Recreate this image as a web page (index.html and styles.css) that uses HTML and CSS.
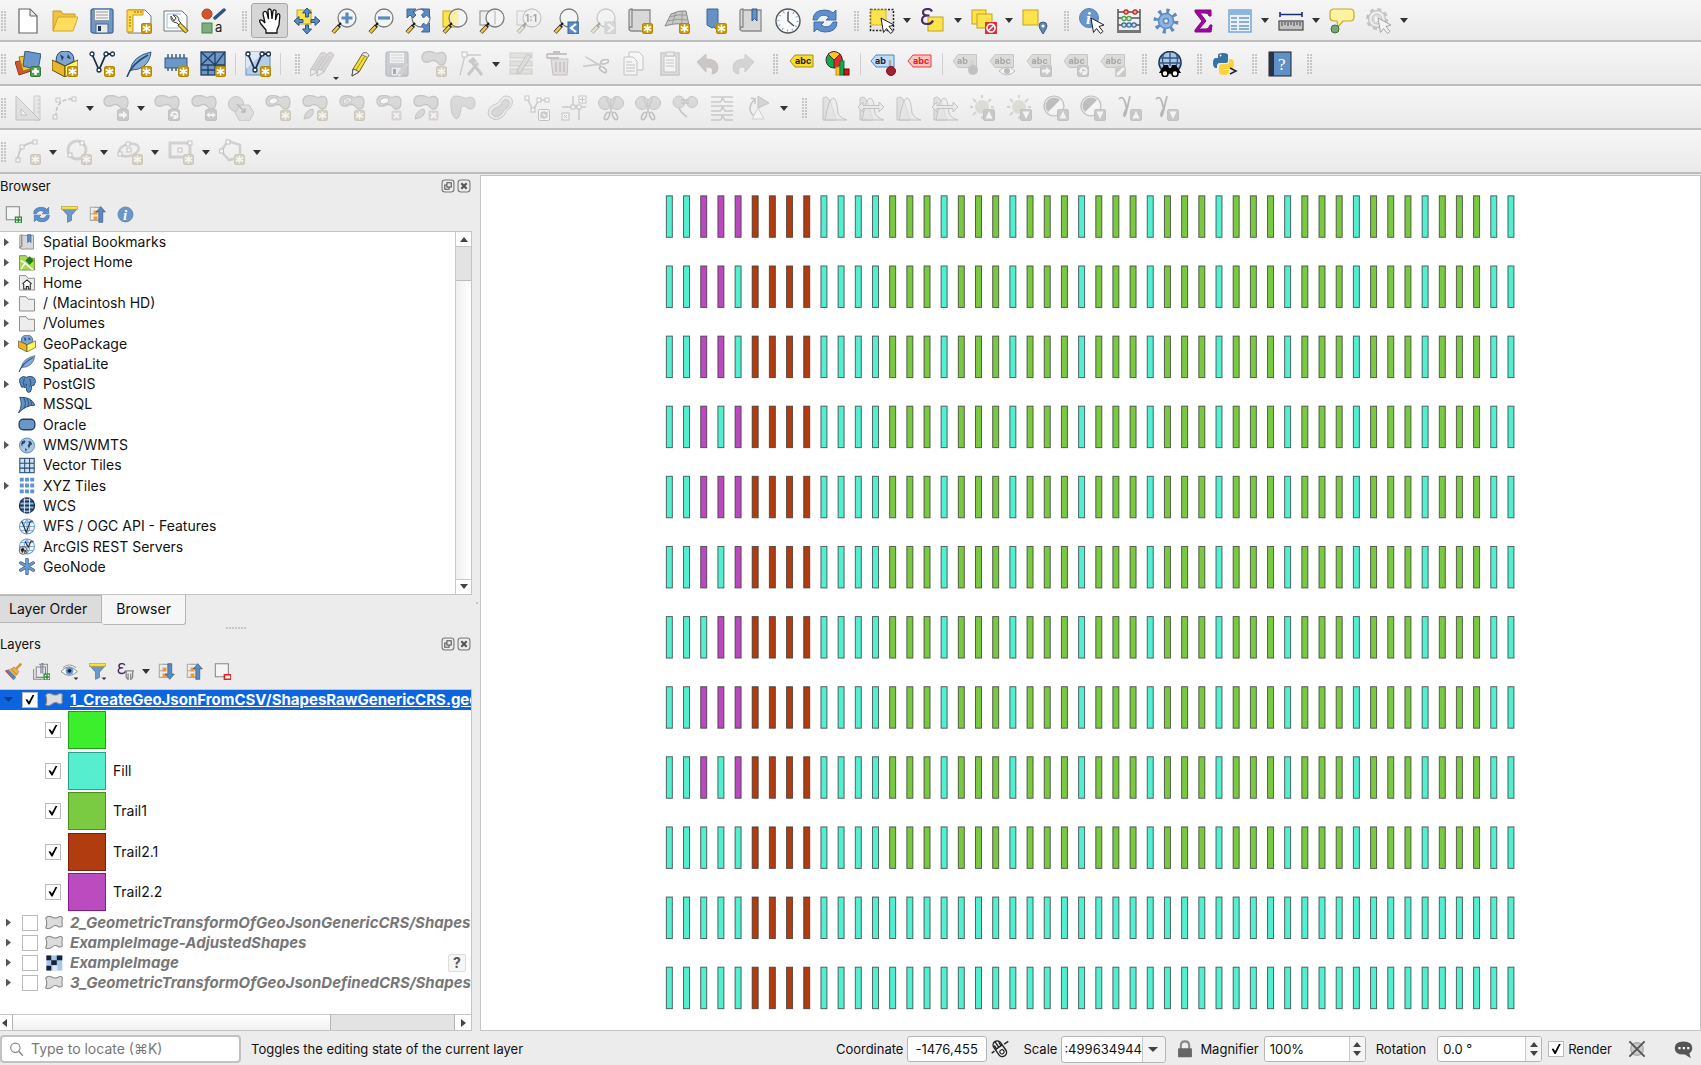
FILE: index.html
```html
<!DOCTYPE html>
<html lang="en">
<head>
<meta charset="utf-8">
<title>QGIS</title>
<link rel="stylesheet" href="styles.css">
</head>
<body>
<svg class="sprite" aria-hidden="true">
<!-- badges -->
<symbol id="b-new" viewBox="0 0 26 26"><rect x="15.500" y="15.500" width="10" height="10" rx="1.500" fill="#c99a12" stroke="#b58900" /><path d="M20.500 16.500v8M16.800 18.500l7.400 4M24.200 18.500l-7.400 4" stroke="#fff" stroke-width="1.600"/></symbol>
<symbol id="b-plus" viewBox="0 0 26 26"><rect x="15.500" y="15.500" width="10" height="10" rx="1.500" fill="#5a9a5c" stroke="#2f7a35"/><path d="M20.500 17v7M17 20.500h7" stroke="#fff" stroke-width="2.400"/></symbol>
<symbol id="b-x" viewBox="0 0 26 26"><rect x="15.500" y="15.500" width="10" height="10" rx="1.500" fill="#d99aa4"/><path d="M18 18l5 5M23 18l-5 5" stroke="#fff" stroke-width="2"/></symbol>
<symbol id="b-sq" viewBox="0 0 26 26"><rect x="14.500" y="14.500" width="11" height="11" rx="1.500" fill="#888" stroke="#777"/></symbol>
<symbol id="b-right" viewBox="0 0 26 26"><use href="#b-sq"/><path d="M16 18.500h4v-2.500l4.500 4-4.500 4v-2.500h-4z" fill="#fff"/></symbol>
<symbol id="b-turn" viewBox="0 0 26 26"><use href="#b-sq"/><path d="M17.500 20a3 3 0 1 1 3.500 3" fill="none" stroke="#fff" stroke-width="1.800"/><path d="M15.500 19.500h4.500l-2.200 3zM20 20h2v4h-3z" fill="#fff"/></symbol>
<symbol id="b-up" viewBox="0 0 26 26"><use href="#b-sq"/><path d="M20 16l3.500 7.500h-7z" fill="#fff"/></symbol>
<symbol id="b-down" viewBox="0 0 26 26"><use href="#b-sq"/><path d="M20 24l3.500-7.500h-7z" fill="#fff"/></symbol>
<!-- shared shapes -->
<symbol id="s-lens" viewBox="0 0 26 26"><path d="M2 24.500l6.500-7" stroke="#222" stroke-width="4"/><path d="M2.200 24.300l5.300-5.700" stroke="#f5c83b" stroke-width="2.500"/><circle cx="16" cy="10" r="9" fill="#f4f6f6" fill-opacity=".8" stroke="#7c7c7c" stroke-width="1.300"/><path d="M8 17l2-2" stroke="#111" stroke-width="2"/></symbol>
<symbol id="s-blob" viewBox="0 0 26 26"><path d="M1 6.500q0-6 7-6q3 0 6 1.500q3 1 5-.5q6-1 6 5.500q0 7-5 7q-2 0-4-3q-3-3-8 0q-7 1-7-4.500z" fill="#a6b0a6" stroke="#777" stroke-width="1.300"/></symbol>
<symbol id="s-ring" viewBox="0 0 26 26"><use href="#s-blob"/><ellipse cx="8.500" cy="6" rx="4.500" ry="3" transform="rotate(-15 8 6)" fill="#fff" stroke="#777"/></symbol>
<symbol id="s-tag" viewBox="0 0 26 26"><path d="M1 10l5-6.500h18.500v13H6z" fill="#b9b79b" stroke="#7f7d68"/><text x="5.500" y="13" class="tagtext" fill="#222">abc</text></symbol>
<symbol id="s-globe" viewBox="0 0 26 26"><circle cx="13" cy="13" r="11.500" fill="#a9c6e8" stroke="#5c83b3" stroke-width="1.400"/><path d="M5 7l4-2 2 2-2 3-3 1v4l-2-3zM15 6l4 1 2 4-3 2-2 5-2-5 2-3zM10 17l3 2-2 4z" fill="#27496f"/></symbol>
<symbol id="s-wire" viewBox="0 0 26 26"><circle cx="13" cy="13" r="11.500" fill="#eef5ff" stroke="#6d9bd1" stroke-width="1.600"/><path d="M13 2v22M2 13h22M4 7h18M4 19h18M13 2q-9 11 0 22q9-11 0-22" fill="none" stroke="#6d9bd1" stroke-width="1.300"/></symbol>
<symbol id="s-cursor" viewBox="0 0 26 26"><path d="M12 10l13 7-5 1.500 4 5-2.500 2-4-5-3 4z" fill="#fff" stroke="#222"/></symbol>
<symbol id="s-scroll" viewBox="0 0 26 26"><path d="M2 3q0-2 3-2v18h-1q-2 0-2 3zM5 2h18v21H4q-3-1-1-4h2z" fill="#d8d8d8" stroke="#8a8a8a" stroke-width="1.300"/></symbol>
<symbol id="s-v" viewBox="0 0 26 26"><path d="M3 3l7 16L17 3h6" fill="none" stroke="#1d3146" stroke-width="1.800"/><g fill="#fff" stroke="#1d3146" stroke-width="1.300"><circle cx="3" cy="3" r="2"/><circle cx="10" cy="19" r="2"/><circle cx="17" cy="3" r="2"/><circle cx="23.500" cy="3" r="2"/></g></symbol>
<symbol id="s-feather" viewBox="0 0 26 26"><path d="M4 20q2-15 21-19q-1 9-7 14q-5 4-12 4z" fill="#86acd8" stroke="#35587f"/><path d="M1 26q4-13 21-22" fill="none" stroke="#27496f" stroke-width="1.600"/></symbol>
<symbol id="s-box" viewBox="0 0 26 26"><path d="M4 10q0-10 9-10t9 10l-9 5z" fill="#7ea5d4" stroke="#24476d"/><path d="M8 3l4 3-2 4M16 3l-1 4 4 1" fill="#27496f"/><path d="M0 9l13 6v11L0 19z" fill="#e9b52c" stroke="#634e0c"/><path d="M26 9l-13 6v11l13-7z" fill="#fff36a" stroke="#634e0c"/></symbol>
<symbol id="s-pencil" viewBox="0 0 26 26"><path d="M5 25l1-7L16 2q4-2 6 2L12 21z" fill="#f2de3c" stroke="#6a6325" /><path d="M5 25l1-7 3 1 3 2z" fill="#eee" stroke="#555"/><path d="M16 2q4-2 6 2l-1.500 2.500-6-3z" fill="#e8e8e8" stroke="#888"/><path d="M9 19l9-14" stroke="#a59522"/></symbol>
<symbol id="s-dim" viewBox="0 0 26 26"><path d="M3 25l1-7L14 2q4-2 6 2L10 21z" fill="#bfa3a3" stroke="#777"/><path d="M3 25l1-7 3 1 3 2z" fill="#eee" stroke="#777"/><path d="M7 19l9-14" stroke="#8d7676"/></symbol>
<symbol id="s-hist" viewBox="0 0 26 26"><path d="M2 25V3q6-5 10 12q2 7 3 10z" fill="#b7cdb4" stroke="#777"/><path d="M4 25q4-22 8-22t5 15q2 5 9 7z" fill="#ead9d9" fill-opacity=".6" stroke="#777"/></symbol>
<symbol id="s-arrows" viewBox="0 0 26 26"><path d="M0 12l5-5v3.500h16V7l5 5-5 5v-3.500H5V17z" fill="#ddd" stroke="#777"/></symbol>
<symbol id="s-sun" viewBox="0 0 26 26"><circle cx="13" cy="12" r="7" fill="#c1b98c"/><path d="M13 0v3M13 21v3M1 12h3M22 12h3M4 4l3 3M19 7l3-3M4 20l3-3" stroke="#a59d70" stroke-width="1.800"/></symbol>
<symbol id="s-contrast" viewBox="0 0 26 26"><circle cx="11" cy="11" r="10" fill="#f3f3f3" stroke="#666" stroke-width="1.200"/><circle cx="11" cy="11" r="8" fill="#fff"/><path d="M5 17A8 8 0 0 1 17 5z" fill="#666"/></symbol>
<symbol id="s-scissors" viewBox="0 0 26 26"><path d="M8 1l6 17M18 1l-6 17" stroke="#888" stroke-width="1.600"/><g fill="none" stroke="#8e6670" stroke-width="1.600"><ellipse cx="9" cy="21" rx="2" ry="4" transform="rotate(25 9 21)"/><ellipse cx="17" cy="21" rx="2" ry="4" transform="rotate(-25 17 21)"/></g></symbol>
<symbol id="s-funnel" viewBox="0 0 26 26"><path d="M1 4l9 10v11l6-3v-8l9-10z" fill="#6b98ce" stroke="#456a98"/><rect x="1" y="1" width="24" height="4" fill="#f8e33c" stroke="#b89e26"/></symbol>
<symbol id="s-tree" viewBox="0 0 26 26"><path d="M10 2H2v20h8M2 12h8" fill="none" stroke="#aaa" stroke-width="1.600"/><path d="M8 2h9M8 22h9" stroke="#aaa" stroke-width="2"/><rect x="7" y="7" width="6" height="6" fill="#f09a32"/><rect x="7" y="16" width="6" height="6" fill="#f09a32"/></symbol>
<symbol id="s-folder" viewBox="0 0 26 26"><path d="M1.500 2.500h10l3 4h10v18h-23z" fill="#ededed" stroke="#8d8d8d" stroke-width="1.500"/></symbol>
<symbol id="s-poly" viewBox="0 0 26 26"><path d="M1 6q3-4 8-2q5 3 9 1q5-3 7 0q-1 8 0 12q-3 3-6 1q-4-3-9 1q-5 4-9 1q3-6 0-14z" fill="#dcdcdc" stroke="#868686" stroke-width="1.500"/></symbol>
<symbol id="s-eps" viewBox="0 0 26 26"><path d="M12 3.500q-1-2.500-4-2.500-5 0-5 3.500 0 3 5 3-6 0-6 4.500 0 4 5 4 4.500 0 6-3.500M6.500 7.500h3" fill="none" stroke="#4b2c63" stroke-width="2.200"/></symbol>
<!-- project toolbar -->
<symbol id="i-new" viewBox="0 0 26 26"><path d="M4 1h11l7 7v17H4z" fill="#fff" stroke="#666" stroke-width="1.200"/><path d="M15 1v7h7z" fill="#e7e7e7" stroke="#666"/></symbol>
<symbol id="i-open" viewBox="0 0 26 26"><path d="M1 3h8l2 3h12v5L4 22l-3 1z" fill="#f1c33e" stroke="#c39b20"/><path d="M6 9h20l-5 14H1z" fill="#fddd5d" stroke="#cfa62b"/></symbol>
<symbol id="i-save" viewBox="0 0 26 26"><rect x="2" y="1" width="22" height="24" rx="2" fill="#6f98c9" stroke="#466b99" stroke-width="1.300"/><rect x="5.500" y="1.500" width="15" height="11" fill="#f5f5f5" stroke="#8a97a6"/><path d="M7 4h12M7 7h12M7 10h12" stroke="#999"/><rect x="7" y="16" width="12" height="9" fill="#e8e8e8" stroke="#466b99"/><rect x="9" y="18" width="3" height="5" fill="#1f3556"/></symbol>
<symbol id="i-layout" viewBox="0 0 26 26"><path d="M2 2h17l6 6v17H2z" fill="#fff" stroke="#777"/><path d="M1 2h16v5H7v17H1z" fill="#ffd94e" stroke="#c79c1c"/><path d="M3 9h2M3 12h2M3 15h2M3 18h2M9 3v2M12 3v2M15 3v2" stroke="#8c6d10"/><use href="#b-new"/></symbol>
<symbol id="i-manager" viewBox="0 0 26 26"><path d="M1 3h18l5 5v15H1z" fill="#fff" stroke="#777"/><path d="M4 6h14M4 6v14h12" fill="none" stroke="#9bbbe0"/><path d="M8 8q-1 6 6 7l2 2 2-2-2-2q0-6-6-6l3 3-2 3z" fill="#eee" stroke="#444"/><path d="M16 16l8 8" stroke="#5b4a10" stroke-width="4.500"/><path d="M16.500 16.500l7 7" stroke="#f2cf45" stroke-width="2.500"/></symbol>
<symbol id="i-style" viewBox="0 0 26 26"><circle cx="7" cy="6" r="5" fill="#d0552f" stroke="#b0401d"/><rect x="2" y="15" width="10" height="10" fill="#7cae7e" stroke="#47834b"/><path d="M15 10l9-8" stroke="#2d5486" stroke-width="3.500" stroke-linecap="round"/><text x="15" y="24" font-size="13" fill="#222">a</text></symbol>
<!-- navigation toolbar -->
<symbol id="i-hand" viewBox="0 0 26 26"><path d="M9 25v-3L4 16q-2-3-1-4q2-1 5 3L6 6q0-2 1.500-2.500T10 5l1.500 6L11 2.500Q11 1 12.500 1T14.300 3L15 11l1-8q.5-1.500 2-1t1 2l-.5 8L20 7q1-2 2-1t.8 2L22 17l-2 5v3z" fill="#fff" stroke="#111" stroke-width="1.300"/></symbol>
<symbol id="i-pan" viewBox="0 0 26 26"><rect x="3" y="2" width="14" height="14" fill="#fde44a" stroke="#c1a218"/><g fill="#5d8cc2" stroke="#2b5282"><path id="arrow4" d="M13 0l4.500 5h-3v4h-3V5h-3z"/><use href="#arrow4" transform="rotate(90 13 13)"/><use href="#arrow4" transform="rotate(180 13 13)"/><use href="#arrow4" transform="rotate(270 13 13)"/></g></symbol>
<symbol id="i-zin" viewBox="0 0 26 26"><use href="#s-lens"/><path d="M16 4.500v11M10.500 10h11" stroke="#5b8ac0" stroke-width="3.200"/></symbol>
<symbol id="i-zout" viewBox="0 0 26 26"><use href="#s-lens"/><path d="M10 10h12" stroke="#5b8ac0" stroke-width="3.200"/></symbol>
<symbol id="i-zfull" viewBox="0 0 26 26"><use href="#s-lens"/><g fill="#5b8ac0" stroke="#3c6695"><path d="M2 1h9L8 4l3 3-3 3-3-3-3 3z"/><path d="M24.500 1h-8l3 3-3 3 2 3 3-3 3 3z"/><path d="M24.500 24h-8l3-3-3-3 2-3 3 3 3-3z"/></g></symbol>
<symbol id="i-zsel" viewBox="0 0 26 26"><rect x="1" y="3" width="15" height="16" fill="#fde44a" stroke="#c1a218"/><use href="#s-lens"/><path d="M10 5q6-4 6 0v11H11q-5-5-1-11z" fill="#fbefa0"/></symbol>
<symbol id="i-zlayer" viewBox="0 0 26 26"><rect x="1" y="3" width="15" height="14" fill="#eee" stroke="#888"/><use href="#s-lens"/><path d="M16 3v13" stroke="#bbb"/></symbol>
<symbol id="i-z11" viewBox="0 0 26 26"><rect x="1" y="3" width="15" height="14" fill="#eee" stroke="#888"/><use href="#s-lens"/><text x="9" y="14" font-size="10" font-weight="700" fill="#222">1:1</text></symbol>
<symbol id="i-zlast" viewBox="0 0 26 26"><use href="#s-lens"/><rect x="15" y="14" width="11" height="12" fill="#5b8ac0" stroke="#3c6695"/><path d="M23 16l-5 4 5 4" fill="none" stroke="#fff" stroke-width="2.200"/></symbol>
<symbol id="i-znext" viewBox="0 0 26 26"><use href="#s-lens"/><rect x="15" y="14" width="11" height="12" fill="#9fb0c4" stroke="#8899aa"/><path d="M18 16l5 4-5 4" fill="none" stroke="#fff" stroke-width="2.200"/></symbol>
<symbol id="i-newmap" viewBox="0 0 26 26"><use href="#s-scroll"/><use href="#b-new"/></symbol>
<symbol id="i-new3d" viewBox="0 0 26 26"><path d="M7 6q8-4 15-3l3 14q-12-3-24 1z" fill="#c9c9c9" stroke="#888"/><path d="M5 9q9-3 18-2M3 13q11-3 21-1M12 4L8 17M18 3v13" fill="none" stroke="#999"/><use href="#b-new"/></symbol>
<symbol id="i-newbm" viewBox="0 0 26 26"><path d="M6 1h11v22l-4-4-2 1-5-3z" fill="#6591c6" stroke="#3d6698"/><use href="#b-new"/></symbol>
<symbol id="i-bm" viewBox="0 0 26 26"><use href="#s-scroll"/><path d="M14 1h5v12l-2.500-2.500L14 13z" fill="#6591c6" stroke="#2d5486"/></symbol>
<symbol id="i-clock" viewBox="0 0 26 26"><circle cx="13" cy="13" r="12" fill="#f8fbfd" stroke="#555" stroke-width="1.400"/><circle cx="13" cy="13" r="9.500" fill="none" stroke="#77a0cc" stroke-width="2" stroke-dasharray="1 3.970"/><path d="M13 4v9l6 5" fill="none" stroke="#555" stroke-width="1.500"/></symbol>
<symbol id="i-refresh" viewBox="0 0 26 26"><path d="M1 12q0-10 12-10q5 0 8 3l3-3v10H14l3-3q-8-5-12 3z" fill="#5f90cd" stroke="#3f6fa8"/><path d="M25 14q0 10-12 10q-5 0-8-3l-3 3V14h10l-3 3q8 5 12-3z" fill="#5f90cd" stroke="#3f6fa8"/></symbol>
<!-- selection and attributes -->
<symbol id="i-select" viewBox="0 0 26 26"><rect x="1.500" y="1.500" width="23" height="21" fill="#e6e6e6" stroke="#222" stroke-width="1.500" stroke-dasharray="2 1.500"/><rect x="2" y="2" width="15" height="15" fill="#fde44a" stroke="#d7b622"/><use href="#s-cursor"/></symbol>
<symbol id="i-eps" viewBox="0 0 26 26"><rect x="8" y="9" width="15" height="14" fill="#fde44a" stroke="#c1a218"/><use href="#s-eps"/></symbol>
<symbol id="i-desel" viewBox="0 0 26 26"><rect x="1" y="2" width="14" height="14" fill="#fde44a" stroke="#c1a218"/><rect x="6" y="6" width="15" height="14" fill="#fde44a" stroke="#c1a218"/><rect x="14" y="14" width="12" height="12" fill="#d9303a"/><circle cx="20" cy="20" r="4" fill="none" stroke="#fff" stroke-width="1.600"/><path d="M17 23l6-6" stroke="#fff" stroke-width="1.600"/></symbol>
<symbol id="i-selloc" viewBox="0 0 26 26"><rect x="1" y="2" width="15" height="15" fill="#fde44a" stroke="#c1a218"/><path d="M21 26q-4-6-4-8a4 4 0 0 1 8 0q0 2-4 8z" fill="#5f87b2" stroke="#406080"/><circle cx="21" cy="18" r="1.500" fill="#fff"/></symbol>
<symbol id="i-identify" viewBox="0 0 26 26"><circle cx="10" cy="10" r="9.500" fill="#6b96c9" stroke="#5580b3"/><text x="7" y="16" font-size="17" font-style="italic" font-weight="700" class="serif" fill="#fff">i</text><use href="#s-cursor"/></symbol>
<symbol id="i-abacus" viewBox="0 0 26 26"><path d="M2 1v23M24 1v23M2 4h22M2 10h22M2 17h22" stroke="#555" stroke-width="1.500"/><rect x="1" y="22" width="24" height="3" fill="#777"/><g stroke-width="1.200"><g fill="#f3a0a0" stroke="#b82222"><circle cx="10" cy="4" r="2.200"/><circle cx="19" cy="4" r="2.200"/></g><g fill="#cdeccb" stroke="#4a9b46"><circle cx="8" cy="10.500" r="2.200"/><circle cx="13" cy="10.500" r="2.200"/></g><g fill="#cde0f6" stroke="#35669c"><circle cx="8" cy="17" r="2.200"/><circle cx="13" cy="17" r="2.200"/><circle cx="18" cy="17" r="2.200"/></g></g></symbol>
<symbol id="i-gear" viewBox="0 0 26 26"><circle cx="13" cy="13" r="10" fill="none" stroke="#5c8ac4" stroke-width="5" stroke-dasharray="3 4.854"/><circle cx="13" cy="13" r="7.500" fill="#8fb3e0" stroke="#5c8ac4" stroke-width="1.500"/><circle cx="13" cy="13" r="2.500" fill="#f2f2f2" stroke="#5c8ac4" stroke-width="1.500"/></symbol>
<symbol id="i-sigma" viewBox="0 0 26 26"><path d="M5 2h16v6h-2q0-3-4-3H10l6 8-7 8h7q3 0 4-4h2l-1 7H5v-2l7-9-7-9z" fill="#a400a4" stroke="#7d0c7d"/></symbol>
<symbol id="i-table" viewBox="0 0 26 26"><rect x="2" y="2" width="22" height="22" fill="#eaf3fc" stroke="#78a5d2" stroke-width="1.500"/><rect x="2" y="2" width="22" height="5" fill="#8db7e2"/><path d="M4 10h6M12 10h10M4 14h6M12 14h10M4 18h6M12 18h10M4 21h6M12 21h10" stroke="#6d98c6" stroke-width="1.500"/></symbol>
<symbol id="i-measure" viewBox="0 0 26 26"><path d="M2 6.500h22M2 4v5M24 4v5" stroke="#1c2c78" stroke-width="1.600"/><rect x="1" y="13" width="24" height="9" fill="#c2c2c2" stroke="#555" stroke-width="1.300"/><path d="M4 14v4M7 14v3M10 14v4M13 14v3M16 14v4M19 14v3M22 14v4" stroke="#444"/></symbol>
<symbol id="i-tip" viewBox="0 0 26 26"><path d="M5 1h16q4 0 4 4v4q0 4-4 4h-7l-5 6-1-6H5q-4 0-4-4V5q0-4 4-4z" fill="#fdf3a0" stroke="#c4a92a" stroke-width="1.200"/><circle cx="6" cy="21" r="4" fill="#74a873" stroke="#406e40"/></symbol>
<symbol id="i-action" viewBox="0 0 26 26"><circle cx="11" cy="11" r="9.500" fill="none" stroke="#777" stroke-width="3" stroke-dasharray="4 3.460"/><circle cx="11" cy="11" r="8.500" fill="#e8e8e8" stroke="#777" stroke-width="1.300"/><circle cx="11" cy="11" r="5" fill="#bbb" stroke="#777"/><path d="M9 8l5 3-5 3z" fill="#fff"/><use href="#s-cursor"/></symbol>
<!-- data source toolbar -->
<symbol id="i-dsm" viewBox="0 0 26 26"><path d="M0 11l12-3 4 12-12 4z" fill="#d0552f" stroke="#94391a"/><path d="M4 6l12-2 3 13-11 3z" fill="#f2c43a" stroke="#9a7a17"/><path d="M10 0l16 3-3 16-15-4z" fill="#6b96c9" stroke="#36597f"/><use href="#b-plus"/></symbol>
<symbol id="i-gpkg" viewBox="0 0 26 26"><use href="#s-box"/><use href="#b-new"/></symbol>
<symbol id="i-shp" viewBox="0 0 26 26"><use href="#s-v"/><use href="#b-new"/></symbol>
<symbol id="i-spl" viewBox="0 0 26 26"><use href="#s-feather"/><use href="#b-new"/></symbol>
<symbol id="i-mem" viewBox="0 0 26 26"><path d="M5 3v17M9 3v17M13 3v17M17 3v17M21 3v17" stroke="#27496f" stroke-width="1.300"/><rect x="2" y="7" width="22" height="10" fill="#6b96c9" stroke="#36597f"/><use href="#b-new"/></symbol>
<symbol id="i-mesh" viewBox="0 0 26 26"><rect x="1" y="1" width="24" height="23" fill="#6b96c9" stroke="#24405e" stroke-width="1.300"/><path d="M1 1l14 13M15 1L1 14M15 1v13M25 1L15 14M1 14h24M8 14v10M1 19h14M15 14v10" stroke="#24405e" stroke-width="1.300"/><use href="#b-new"/></symbol>
<symbol id="i-virt" viewBox="0 0 26 26"><rect x="1" y="1" width="24" height="23" fill="#b4cdea" stroke="#6b8db5"/><path d="M1 1h18L1 18z" fill="#dce8f5"/><use href="#s-v"/><use href="#b-new"/></symbol>
<!-- digitizing toolbar -->
<symbol id="i-edits" viewBox="0 0 26 26"><use href="#s-dim" x="-3"/><use href="#s-dim" x="4"/></symbol>
<symbol id="i-saveedit" viewBox="0 0 26 26"><use href="#i-save"/><use href="#s-dim" x="12" y="11" width="16" height="16"/></symbol>
<symbol id="i-addpoly" viewBox="0 0 26 26"><use href="#s-blob"/><use href="#b-new"/></symbol>
<symbol id="i-vertex" viewBox="0 0 26 26"><path d="M2 24L7 4h16" fill="none" stroke="#888" stroke-width="1.400"/><rect x="4" y="1" width="5" height="5" fill="#fff" stroke="#777"/><path d="M10 24L20 12M13 10l11 14M11 11l4-3 3 3" fill="none" stroke="#888" stroke-width="3"/></symbol>
<symbol id="i-multi" viewBox="0 0 26 26"><g fill="#ccc99b" stroke="#999674"><rect x="1" y="2" width="22" height="5"/><rect x="1" y="10" width="22" height="5"/><rect x="1" y="18" width="22" height="5"/></g><path d="M8 23l1-5L18 3l4 2L12 21z" fill="#cfb5b5" stroke="#777"/></symbol>
<symbol id="i-trash" viewBox="0 0 26 26"><path d="M1 3h20M1 7h12M1 3v4M7 1h7" stroke="#986a6a" stroke-width="1.800"/><path d="M5 8h17l-1 16H7z" fill="#d9bcbc" stroke="#986a6a"/><path d="M10 11v10M14 11v10M18 11v10" stroke="#986a6a" stroke-width="1.500"/></symbol>
<symbol id="i-cut" viewBox="0 0 26 26"><use href="#s-scissors" transform="rotate(-78 13 13)"/></symbol>
<symbol id="i-copy" viewBox="0 0 26 26"><g fill="#fff" stroke="#777"><path d="M9 1h10l4 4v14H9z"/><path d="M4 6h9l4 4v14H4z"/></g><path d="M6 11h6M6 14h9M6 17h9M6 20h9" stroke="#777"/></symbol>
<symbol id="i-paste" viewBox="0 0 26 26"><rect x="4" y="2" width="18" height="22" fill="#c8c5b4" stroke="#777" stroke-width="1.300"/><rect x="7" y="5" width="12" height="16" fill="#fff" stroke="#777"/><rect x="9" y="1" width="8" height="4" fill="#ddd" stroke="#777"/><path d="M9 9h8M9 12h8M9 15h8" stroke="#777"/></symbol>
<symbol id="i-undo" viewBox="0 0 26 26"><path d="M3 11l9-8v5q12 0 12 9q0 5-6 6q3-8-6-7v5z" fill="#a97b6b" stroke="#99705f"/></symbol>
<symbol id="i-redo" viewBox="0 0 26 26"><path d="M23 11l-9-8v5Q2 8 2 17q0 5 6 6q-3-8 6-7v5z" fill="#91ae91" stroke="#799679"/></symbol>
<symbol id="i-label" viewBox="0 0 26 26"><path d="M2 10l5-6h18v12H7z" fill="#f6dd2d" stroke="#a88f16"/><text x="7" y="13" class="tagtext" fill="#222">abc</text></symbol>
<symbol id="i-diagram" viewBox="0 0 26 26"><circle cx="9" cy="9" r="8" fill="#18a84b" stroke="#333"/><path d="M9 9L3 3q6-5 12 0z" fill="#ffc61a" stroke="#333"/><path d="M9 9l6-6q5 6-1 12l-5 2z" fill="#df2b2b" stroke="#333"/><rect x="11" y="16" width="4" height="8" fill="#ffc61a" stroke="#d80"/><rect x="15" y="10" width="4" height="14" fill="#18a84b" stroke="#075"/><rect x="19" y="18" width="5" height="6" fill="#bf1e1e" stroke="#700"/></symbol>
<symbol id="i-pinlab" viewBox="0 0 26 26"><path d="M1 10l5-6h18v12H6z" fill="#bfdcfb" stroke="#4d85c4"/><text x="5" y="13" class="tagtext" fill="#222">ab</text><path d="M20 9v10" stroke="#aaa" stroke-width="2.500"/><circle cx="21" cy="20" r="4.500" fill="#a3202c" stroke="#741620"/></symbol>
<symbol id="i-redlab" viewBox="0 0 26 26"><path d="M1 10l5-6h18v12H6z" fill="#ffc4c4" stroke="#f03a3a"/><text x="6" y="13" class="tagtext" fill="#e02020">abc</text></symbol>
<symbol id="i-lab1" viewBox="0 0 26 26"><path d="M1 10l5-6.500h18.500v13H6z" fill="#b9b79b" stroke="#7f7d68"/><text x="5" y="13" class="tagtext" fill="#222">ab</text><path d="M20 9v9" stroke="#999" stroke-width="3"/><circle cx="21" cy="19" r="5" fill="#8c6c76"/></symbol>
<symbol id="i-lab2" viewBox="0 0 26 26"><use href="#s-tag"/><path d="M10 20q8-8 16 0q-8 8-16 0z" fill="#fff" stroke="#666"/><circle cx="18" cy="20" r="3" fill="#666"/></symbol>
<symbol id="i-lab3" viewBox="0 0 26 26"><use href="#s-tag"/><use href="#b-right"/></symbol>
<symbol id="i-lab4" viewBox="0 0 26 26"><use href="#s-tag"/><use href="#b-turn"/></symbol>
<symbol id="i-lab5" viewBox="0 0 26 26"><use href="#s-tag"/><rect x="15" y="15" width="11" height="11" rx="1.500" fill="#96937a"/><path d="M17 24l7-7" stroke="#fff" stroke-width="2.500"/></symbol>
<symbol id="i-meta" viewBox="0 0 26 26"><circle cx="13" cy="11.500" r="11" fill="#a9c6e8" stroke="#1d3757" stroke-width="1.600"/><path d="M3 7h20M2 12h22M13 1v14M7 2q-3 8 0 13M19 2q3 8 0 13" fill="none" stroke="#35587f" stroke-width="1.300"/><path d="M7 14h4l1 3h2l1-3h4l5 8H2z" fill="#000"/><circle cx="8" cy="22.500" r="3" fill="#fff" stroke="#000" stroke-width="1.600"/><circle cx="18" cy="22.500" r="3" fill="#fff" stroke="#000" stroke-width="1.600"/></symbol>
<symbol id="i-python" viewBox="0 0 26 26"><path d="M6 7V4q0-2 5-2t5 2v6q0 2-3 2H8q-3 0-3 3v2H4q-3 0-3-5t3-5h7V7z" fill="#3572a5"/><path d="M17 8h2q3 0 3 5t-3 5h-7v1h5v2q0 3-5 3t-5-3v-5q0-3 3-3h4q3 0 3-3z" fill="#fdd23c"/><circle cx="8.500" cy="4.500" r="1" fill="#fff"/><path d="M18 17l6 3-6 3" fill="none" stroke="#222" stroke-width="1.500"/></symbol>
<symbol id="i-help" viewBox="0 0 26 26"><rect x="2" y="1" width="22" height="24" fill="#5f90c8" stroke="#222"/><rect x="2" y="1" width="5" height="24" fill="#263645"/><text x="11" y="19" font-size="17" class="serif" fill="#fff">?</text></symbol>
<!-- advanced digitizing toolbar -->
<symbol id="i-cad" viewBox="0 0 26 26"><path d="M19 1h6v24h-6z" fill="#ddd9c0" stroke="#888"/><path d="M22 5h3M22 9h3M22 13h3M22 17h3" stroke="#888"/><path d="M1 1l24 24H1z" fill="#d6c2bc" stroke="#777"/><path d="M6 14l6 6H6z" fill="#fff" stroke="#777"/></symbol>
<symbol id="i-segment" viewBox="0 0 26 26"><path d="M4 22q-1-18 17-18" fill="none" stroke="#777" stroke-width="1.600" stroke-dasharray="4 2"/><g fill="#fff" stroke="#777"><rect x="1" y="20" width="4" height="4"/><rect x="4" y="3" width="4" height="4"/><rect x="20" y="2" width="4" height="4"/></g></symbol>
<symbol id="i-mv" viewBox="0 0 26 26"><use href="#s-blob"/><use href="#b-right"/></symbol>
<symbol id="i-rot" viewBox="0 0 26 26"><use href="#s-blob"/><use href="#b-turn"/></symbol>
<symbol id="i-scale" viewBox="0 0 26 26"><use href="#s-blob"/><use href="#b-sq"/><path d="M15.500 20l3-3v2h3v-2l3 3-3 3v-2h-3v2z" fill="#fff"/></symbol>
<symbol id="i-simplify" viewBox="0 0 26 26"><circle cx="8" cy="9" r="7.500" fill="#aab2aa" stroke="#777"/><path d="M12 10h9l5 8-5 8h-9l-5-8z" fill="#bcc6cf" stroke="#777"/><path d="M9 9l8 8M17 13v4h-4" fill="none" stroke="#555" stroke-width="1.300"/></symbol>
<symbol id="i-addring" viewBox="0 0 26 26"><use href="#s-ring"/><use href="#b-new"/></symbol>
<symbol id="i-addpart" viewBox="0 0 26 26"><use href="#s-blob"/><path d="M2 24q1-9 9-10q3 8-9 10z" fill="#aab2aa" stroke="#777"/><use href="#b-new"/></symbol>
<symbol id="i-fillring" viewBox="0 0 26 26"><use href="#s-ring"/><ellipse cx="8.500" cy="6" rx="3" ry="2" fill="#aab2aa"/><use href="#b-new"/></symbol>
<symbol id="i-delring" viewBox="0 0 26 26"><use href="#s-ring"/><use href="#b-x"/></symbol>
<symbol id="i-delpart" viewBox="0 0 26 26"><use href="#s-blob"/><path d="M2 24q1-9 9-10q3 8-9 10z" fill="#aab2aa" stroke="#777"/><use href="#b-x"/></symbol>
<symbol id="i-reshape" viewBox="0 0 26 26"><path d="M1 6q0-5 6-5q3 0 7 2q3 1 6-1q5 0 5 6t-5 6q-3-1-5-3q-3-1-4 2q-1 11-5 11Q0 20 1 6z" fill="#aab2aa" stroke="#808080"/></symbol>
<symbol id="i-offset" viewBox="0 0 26 26"><path d="M2 14q2-4 7-5q3-1 4-4q4-6 10-3q5 4 0 11q-4 2-5 6q-5 7-12 5q-7-3-4-10z" fill="#ddd" stroke="#808080"/><path d="M5 16q2-3 6-4q3-1 4-5q3-4 6-2q3 3 0 7q-4 2-6 6q-3 5-8 3q-3-2-2-5z" fill="#aab2aa" stroke="#808080"/></symbol>
<symbol id="i-revert" viewBox="0 0 26 26"><path d="M3 3l6 12 6-10h8" fill="none" stroke="#888" stroke-width="1.500"/><g fill="#fff" stroke="#777"><rect x="1" y="1" width="4" height="4"/><rect x="7" y="13" width="4" height="4"/><rect x="13" y="3" width="4" height="4"/><rect x="21" y="3" width="4" height="4"/></g><rect x="14.500" y="14.500" width="11" height="11" rx="1.500" fill="#fff" stroke="#777"/><use href="#i-refresh" x="16" y="16" width="8" height="8"/></symbol>
<symbol id="i-trim" viewBox="0 0 26 26"><path d="M12 1v10M1 12h24M18 13v12" stroke="#888" stroke-width="1.500"/><g fill="#fff" stroke="#777"><rect x="10" y="10" width="4" height="4"/><rect x="16" y="10" width="4" height="4"/><rect x="18" y="1" width="7" height="7"/><rect x="1" y="18" width="7" height="7"/></g><path d="M21.500 2v5M19 4.500h5M3 20l3 3M6 20l-3 3" stroke="#777"/></symbol>
<symbol id="i-split" viewBox="0 0 26 26"><circle cx="7" cy="8" r="6.500" fill="#aab2aa" stroke="#777"/><circle cx="19" cy="8" r="6.500" fill="#aab2aa" stroke="#777"/><use href="#s-scissors"/></symbol>
<symbol id="i-merge" viewBox="0 0 26 26"><circle cx="7" cy="7" r="6" fill="#aab2aa" stroke="#777"/><circle cx="20" cy="7" r="5.500" fill="#aab2aa" stroke="#777"/><path d="M9 5h8M9 8h8M7 13q2 5 8 9" fill="none" stroke="#777" stroke-width="1.600"/></symbol>
<symbol id="i-attrs" viewBox="0 0 26 26"><path d="M2 2h22M2 7h8q3 0 3-3t3 3h8M2 11h22M2 16h8q3 0 3-3t3 3h8M2 20h22M2 25h8q3 0 3-3t3 3h8" fill="none" stroke="#888" stroke-width="1.500"/></symbol>
<symbol id="i-rotsym" viewBox="0 0 26 26"><path d="M9 22q-10-8 0-18l-4-1M9 4v5" fill="none" stroke="#777" stroke-width="1.500"/><path d="M12 1l11 7-11 5z" fill="#99a599" stroke="#777"/><path d="M12 13l6 11H6z" fill="#fff" stroke="#999"/></symbol>
<symbol id="i-gamma" viewBox="0 0 26 26"><path d="M2 4q4-4 6 3l2 8M13 1L9 18q-2 6-2 1l2-5" fill="none" stroke="#555" stroke-width="1.800"/></symbol>
<symbol id="i-h2" viewBox="0 0 26 26"><use href="#s-hist"/><use href="#s-arrows"/></symbol>
<symbol id="i-sunup" viewBox="0 0 26 26"><use href="#s-sun"/><use href="#b-up"/></symbol>
<symbol id="i-sundn" viewBox="0 0 26 26"><use href="#s-sun"/><use href="#b-down"/></symbol>
<symbol id="i-conup" viewBox="0 0 26 26"><use href="#s-contrast"/><use href="#b-up"/></symbol>
<symbol id="i-condn" viewBox="0 0 26 26"><use href="#s-contrast"/><use href="#b-down"/></symbol>
<symbol id="i-gamup" viewBox="0 0 26 26"><use href="#i-gamma"/><use href="#b-up" x="-1"/></symbol>
<symbol id="i-gamdn" viewBox="0 0 26 26"><use href="#i-gamma"/><use href="#b-down" x="-1"/></symbol>
<!-- shape toolbar -->
<symbol id="i-curve" viewBox="0 0 26 26"><path d="M3 21q0-16 17-18" fill="none" stroke="#888" stroke-width="1.800"/><g fill="#fff" stroke="#777"><rect x="1" y="19" width="4" height="4"/><rect x="5" y="6" width="4" height="4"/><rect x="18" y="1" width="4" height="4"/></g><use href="#b-new"/></symbol>
<symbol id="i-circle" viewBox="0 0 26 26"><circle cx="11" cy="11" r="9" fill="none" stroke="#999" stroke-width="3"/><g fill="#fff" stroke="#777"><rect x="14" y="2" width="4" height="4"/><rect x="2" y="14" width="4" height="4"/></g><use href="#b-new"/></symbol>
<symbol id="i-ellipse" viewBox="0 0 26 26"><ellipse cx="12" cy="11" rx="10" ry="6" transform="rotate(-15 12 11)" fill="none" stroke="#999" stroke-width="2.500"/><g fill="#fff" stroke="#777"><rect x="10" y="9" width="4" height="4"/><rect x="1" y="13" width="4" height="4"/><rect x="9" y="3" width="4" height="4"/></g><use href="#b-new"/></symbol>
<symbol id="i-rect" viewBox="0 0 26 26"><rect x="2" y="4" width="20" height="14" fill="none" stroke="#999" stroke-width="3"/><g fill="#fff" stroke="#777"><rect x="10" y="9" width="4" height="4"/><rect x="20" y="2" width="4" height="4"/></g><use href="#b-new"/></symbol>
<symbol id="i-penta" viewBox="0 0 26 26"><path d="M9 2l12 4v12l-11 3-8-9z" fill="none" stroke="#999" stroke-width="2.500"/><g fill="#fff" stroke="#777"><rect x="7" y="1" width="4" height="4"/><rect x="0.500" y="10" width="4" height="4"/></g><use href="#b-new"/></symbol>
<!-- panels -->
<symbol id="i-float" viewBox="0 0 26 26"><g fill="none" stroke="#555" stroke-width="2"><rect x="2" y="2" width="22" height="22" rx="5" stroke="#777"/><rect x="11" y="7" width="8" height="8"/><path d="M11 11H7v8h8v-4"/></g></symbol>
<symbol id="i-close" viewBox="0 0 26 26"><rect x="2" y="2" width="22" height="22" rx="5" fill="none" stroke="#777" stroke-width="2"/><path d="M8 8l10 10M18 8L8 18" stroke="#555" stroke-width="4"/></symbol>
<symbol id="i-addsel" viewBox="0 0 26 26"><path d="M2 1h20v20H2z" fill="#f5f5f5" stroke="#888" stroke-width="1.600"/><rect x="16" y="17" width="9" height="9" fill="#fff" stroke="#2d8a36" stroke-width="2"/><path d="M20.500 18v7M17 21.500h7" stroke="#2d8a36" stroke-width="2.400"/></symbol>
<symbol id="i-collapse" viewBox="0 0 26 26"><use href="#s-tree"/><path d="M18 1l7 8h-4v16h-6V9h-4z" fill="#5b8ac0" stroke="#2b5282"/></symbol>
<symbol id="i-expand" viewBox="0 0 26 26"><use href="#s-tree"/><path d="M18 25l7-8h-4V1h-6v16h-4z" fill="#5b8ac0" stroke="#2b5282"/></symbol>
<symbol id="i-info" viewBox="0 0 26 26"><circle cx="13" cy="13" r="11.500" fill="#6b96c9" stroke="#5178a8"/><text x="9" y="21" font-size="23" font-style="italic" font-weight="700" class="serif" fill="#fff">i</text></symbol>
<symbol id="i-brush" viewBox="0 0 26 26"><path d="M0 12l10-4 9 9-6 9z" fill="#f0b030"/><path d="M0 12l5-2 12 12-4 4z" fill="#4a86d0"/><path d="M0 12l3-1 10 15z" fill="#e04040"/><path d="M10 9l4-3 7 7-3 5z" fill="#e5b35f" stroke="#a06f26"/><path d="M17 9l8-8" stroke="#d7952b" stroke-width="4"/></symbol>
<symbol id="i-group" viewBox="0 0 26 26"><path d="M1 9v16h14M5 6h14v16H5zM9 2h13v15" fill="none" stroke="#888" stroke-width="1.600"/><path d="M12 16V2l3-2v16" fill="#b7cbe5" stroke="#556"/><rect x="17" y="17" width="9" height="9" fill="#fff" stroke="#2d8a36" stroke-width="2"/><path d="M21.500 18v7M18 21.500h7" stroke="#2d8a36" stroke-width="2.200"/></symbol>
<symbol id="i-eye" viewBox="0 0 26 26"><path d="M0 13q12-14 25 0q-12 12-25 0z" fill="#fff" stroke="#888" stroke-width="1.500"/><path d="M3 7q10-8 20 0" fill="none" stroke="#999" stroke-width="1.500"/><circle cx="13" cy="12" r="6" fill="#6b9bd3"/><circle cx="13" cy="12" r="3" fill="#17283d"/><path d="M19 22h8l-4 4z" fill="#333"/></symbol>
<symbol id="i-filterm" viewBox="0 0 26 26"><use href="#s-funnel"/><path d="M19 22h8l-4 4z" fill="#333"/></symbol>
<symbol id="i-epsf" viewBox="0 0 26 26"><use href="#s-eps"/><path d="M12 12h14M14 12v9q1 3 3 4v-9M24 12v9q-1 3-3 4v-9" fill="none" stroke="#888" stroke-width="2"/></symbol>
<symbol id="i-remove" viewBox="0 0 26 26"><path d="M2 1h20v20H2z" fill="#f5f5f5" stroke="#888" stroke-width="1.600"/><rect x="16" y="18" width="10" height="7" fill="#fff" stroke="#e22020" stroke-width="2.500"/></symbol>
<symbol id="i-phome" viewBox="0 0 26 26"><path d="M1.500 2.500h10l3 4h10v18h-23z" fill="#a8d957" stroke="#7c9b45" stroke-width="1.500"/><path d="M3 10l7 4 12 10M10 14l-6 9" fill="none" stroke="#fff" stroke-width="2"/><path d="M17 5l5 5-5 5-5-5z" fill="#1d7d1d" stroke="#1d7d1d" stroke-width="2"/></symbol>
<symbol id="i-home" viewBox="0 0 26 26"><use href="#s-folder"/><path d="M6 15l7-6 7 6M8 15v8h4v-4h3v4h3v-8" fill="#fff" stroke="#222" stroke-width="1.600"/></symbol>
<symbol id="i-pg" viewBox="0 0 26 26"><path d="M3 3q4-4 9-1q6-3 11 0q5 4 1 12l-4 1v4q-1 7-5 6q-3 0-3-7l-4-1q-4 2-5-4Q0 6 3 3z" fill="#5b8ac0" stroke="#27496f" stroke-width="1.400"/><path d="M9 4q-3 6 0 12M17 4q4 6 0 12M12 16v-4" fill="none" stroke="#27496f" stroke-width="1.400"/></symbol>
<symbol id="i-mssql" viewBox="0 0 26 26"><path d="M2 2q18-1 23 12q-14 0-25 12q7-12 2-24z" fill="#6591c6" stroke="#27496f" stroke-width="1.400"/><path d="M8 3q5 9 0 16M13 4q5 7 1 12M18 6q3 5 1 9" fill="none" stroke="#27496f" stroke-width="1.400"/></symbol>
<symbol id="i-oracle" viewBox="0 0 26 26"><rect x="1" y="5" width="24" height="16" rx="6" fill="#6b96c9" stroke="#24405e" stroke-width="2"/></symbol>
<symbol id="i-vt" viewBox="0 0 26 26"><rect x="2" y="2" width="22" height="22" fill="#cfe0f3" stroke="#27496f" stroke-width="1.600"/><path d="M9.500 2v22M17 2v22M2 9.500h22M2 17h22" stroke="#27496f" stroke-width="1.600"/></symbol>
<symbol id="i-xyz" viewBox="0 0 26 26"><g fill="#5b93d3"><path d="M2 1h6v6H2zM10 1h6v6h-6zM18 1h6v6h-6zM2 10h6v6H2zM10 10h6v6h-6zM18 10h6v6h-6zM2 19h6v6H2zM10 19h6v6h-6zM18 19h6v6h-6z"/></g></symbol>
<symbol id="i-wcs" viewBox="0 0 26 26"><circle cx="13" cy="13" r="11.500" fill="#8fb3dc" stroke="#1d3757" stroke-width="2"/><path d="M3 7h20M2 13h22M3 19h20" stroke="#1d3757" stroke-width="3"/><path d="M9 2v22M17 2v22" stroke="#eaf2fb" stroke-width="1.500"/></symbol>
<symbol id="i-wfs" viewBox="0 0 26 26"><use href="#s-wire"/><path d="M5 5l7 17 6-17h4" fill="none" stroke="#333" stroke-width="1.800"/></symbol>
<symbol id="i-arc" viewBox="0 0 26 26"><use href="#s-wire"/><path d="M10 5l5 9 4-9h4" fill="none" stroke="#333" stroke-width="1.800"/><circle cx="7" cy="19" r="6" fill="#ddd" stroke="#333"/><path d="M3 18l4-4 2 4-3 5zM9 18l3 1-3 5z" fill="#222"/></symbol>
<symbol id="i-geonode" viewBox="0 0 26 26"><path d="M13 2v22M3.500 7.500l19 11M22.500 7.500l-19 11" stroke="#35587f" stroke-width="5" stroke-linecap="round"/><path d="M13 2v22M3.500 7.500l19 11M22.500 7.500l-19 11" stroke="#6b9bd3" stroke-width="3" stroke-linecap="round"/></symbol>
<symbol id="i-raster" viewBox="0 0 26 26"><path d="M2 2h23v22H2z" fill="#a9c6e8"/><path d="M2 2h7v7H2zM17 2h8v7h-8zM9 9h8v7H9zM2 17h7v7H2z" fill="#14223a"/><path d="M11 17h7v7h-7z" fill="#dce8f6"/></symbol>
<symbol id="i-search" viewBox="0 0 26 26"><circle cx="11" cy="10" r="8" fill="none" stroke="#888" stroke-width="2"/><path d="M17 16l7 8" stroke="#888" stroke-width="2.500"/></symbol>
<symbol id="i-mouse" viewBox="0 0 26 26"><g transform="rotate(-35 13 13)"><rect x="7" y="0" width="12" height="25" rx="6" fill="#eee" stroke="#222" stroke-width="2"/><path d="M7 10h12M13 1v9M9 4v5M17 4v5" stroke="#222" stroke-width="2"/><circle cx="13" cy="18" r="3" fill="#fff" stroke="#222" stroke-width="1.600"/></g><path d="M1 19l4-3M19 6l6-4" stroke="#222" stroke-width="2"/></symbol>
<symbol id="i-lock" viewBox="0 0 26 26"><path d="M7 13V8q0-6 6-6t6 6v5" fill="none" stroke="#888" stroke-width="3"/><rect x="3" y="12" width="20" height="13" rx="1" fill="#666"/></symbol>
<symbol id="i-crs" viewBox="0 0 26 26"><circle cx="13" cy="13" r="9" fill="#ccc" stroke="#aaa" stroke-width="2"/><path d="M2 2l22 22M24 2L2 24" stroke="#555" stroke-width="2.800"/></symbol>
<symbol id="i-chat" viewBox="0 0 26 26"><path d="M13 2q12 0 12 9 0 5-4 7l2 7-8-5H13Q1 20 1 11 1 2 13 2z" fill="#555"/><path d="M6 11h3M12 11h3M18 11h3" stroke="#fff" stroke-width="3"/></symbol>
</svg>

<header class="toolbars">
  <div class="toolbar">
    <i class="grip"></i>
    <button class="tool" aria-label="New Project"><svg><use href="#i-new"/></svg></button>
    <button class="tool" aria-label="Open Project"><svg><use href="#i-open"/></svg></button>
    <button class="tool" aria-label="Save Project"><svg><use href="#i-save"/></svg></button>
    <button class="tool" aria-label="New Print Layout"><svg><use href="#i-layout"/></svg></button>
    <button class="tool" aria-label="Layout Manager"><svg><use href="#i-manager"/></svg></button>
    <button class="tool" aria-label="Style Manager"><svg><use href="#i-style"/></svg></button>
    <i class="grip"></i>
    <button class="tool on" aria-label="Pan Map"><svg><use href="#i-hand"/></svg></button>
    <button class="tool" aria-label="Pan to Selection"><svg><use href="#i-pan"/></svg></button>
    <button class="tool" aria-label="Zoom In"><svg><use href="#i-zin"/></svg></button>
    <button class="tool" aria-label="Zoom Out"><svg><use href="#i-zout"/></svg></button>
    <button class="tool" aria-label="Zoom Full"><svg><use href="#i-zfull"/></svg></button>
    <button class="tool" aria-label="Zoom to Selection"><svg><use href="#i-zsel"/></svg></button>
    <button class="tool" aria-label="Zoom to Layer"><svg><use href="#i-zlayer"/></svg></button>
    <button class="tool" disabled aria-label="Native Resolution"><svg><use href="#i-z11"/></svg></button>
    <button class="tool" aria-label="Zoom Last"><svg><use href="#i-zlast"/></svg></button>
    <button class="tool" disabled aria-label="Zoom Next"><svg><use href="#i-znext"/></svg></button>
    <button class="tool" aria-label="New Map View"><svg><use href="#i-newmap"/></svg></button>
    <button class="tool" aria-label="New 3D Map View"><svg><use href="#i-new3d"/></svg></button>
    <button class="tool" aria-label="New Bookmark"><svg><use href="#i-newbm"/></svg></button>
    <button class="tool" aria-label="Show Bookmarks"><svg><use href="#i-bm"/></svg></button>
    <button class="tool" aria-label="Temporal Controller"><svg><use href="#i-clock"/></svg></button>
    <button class="tool" aria-label="Refresh"><svg><use href="#i-refresh"/></svg></button>
    <i class="grip"></i>
    <button class="tool" aria-label="Select Features"><svg><use href="#i-select"/></svg></button><button class="drop" aria-label="Select options"></button>
    <button class="tool" aria-label="Select by Expression"><svg><use href="#i-eps"/></svg></button><button class="drop" aria-label="Expression options"></button>
    <button class="tool" aria-label="Deselect"><svg><use href="#i-desel"/></svg></button><button class="drop" aria-label="Deselect options"></button>
    <button class="tool" aria-label="Select by Location"><svg><use href="#i-selloc"/></svg></button>
    <i class="grip"></i>
    <button class="tool" aria-label="Identify"><svg><use href="#i-identify"/></svg></button>
    <button class="tool" aria-label="Field Calculator"><svg><use href="#i-abacus"/></svg></button>
    <button class="tool" aria-label="Processing Toolbox"><svg><use href="#i-gear"/></svg></button>
    <button class="tool" aria-label="Statistics"><svg><use href="#i-sigma"/></svg></button>
    <button class="tool" aria-label="Attribute Table"><svg><use href="#i-table"/></svg></button><button class="drop" aria-label="Table options"></button>
    <button class="tool" aria-label="Measure"><svg><use href="#i-measure"/></svg></button><button class="drop" aria-label="Measure options"></button>
    <button class="tool" aria-label="Map Tips"><svg><use href="#i-tip"/></svg></button>
    <button class="tool" disabled aria-label="Run Action"><svg><use href="#i-action"/></svg></button><button class="drop" aria-label="Action options"></button>
  </div>
  <div class="toolbar">
    <i class="grip"></i>
    <button class="tool" aria-label="Data Source Manager"><svg><use href="#i-dsm"/></svg></button>
    <button class="tool" aria-label="New GeoPackage Layer"><svg><use href="#i-gpkg"/></svg></button>
    <button class="tool" aria-label="New Shapefile Layer"><svg><use href="#i-shp"/></svg></button>
    <button class="tool" aria-label="New SpatiaLite Layer"><svg><use href="#i-spl"/></svg></button>
    <button class="tool" aria-label="New Scratch Layer"><svg><use href="#i-mem"/></svg></button>
    <button class="tool" aria-label="New Mesh Layer"><svg><use href="#i-mesh"/></svg></button>
    <i class="rule"></i>
    <button class="tool" aria-label="New Virtual Layer"><svg><use href="#i-virt"/></svg></button>
    <i class="rule"></i>
    <i class="grip"></i>
    <button class="tool mini" disabled aria-label="Current Edits"><svg><use href="#i-edits"/></svg></button>
    <button class="tool" aria-label="Toggle Editing"><svg><use href="#s-pencil"/></svg></button>
    <button class="tool" disabled aria-label="Save Edits"><svg><use href="#i-saveedit"/></svg></button>
    <button class="tool" disabled aria-label="Add Polygon"><svg><use href="#i-addpoly"/></svg></button>
    <button class="tool" disabled aria-label="Vertex Tool"><svg><use href="#i-vertex"/></svg></button><button class="drop" aria-label="Vertex options"></button>
    <button class="tool" disabled aria-label="Modify Attributes"><svg><use href="#i-multi"/></svg></button>
    <button class="tool" disabled aria-label="Delete Selected"><svg><use href="#i-trash"/></svg></button>
    <button class="tool" disabled aria-label="Cut"><svg><use href="#i-cut"/></svg></button>
    <button class="tool" disabled aria-label="Copy"><svg><use href="#i-copy"/></svg></button>
    <button class="tool" disabled aria-label="Paste"><svg><use href="#i-paste"/></svg></button>
    <button class="tool" disabled aria-label="Undo"><svg><use href="#i-undo"/></svg></button>
    <button class="tool" disabled aria-label="Redo"><svg><use href="#i-redo"/></svg></button>
    <i class="grip"></i>
    <button class="tool" aria-label="Labeling"><svg><use href="#i-label"/></svg></button>
    <button class="tool" aria-label="Diagrams"><svg><use href="#i-diagram"/></svg></button>
    <i class="rule"></i>
    <button class="tool" aria-label="Pinned Labels"><svg><use href="#i-pinlab"/></svg></button>
    <button class="tool" aria-label="Unplaced Labels"><svg><use href="#i-redlab"/></svg></button>
    <i class="rule"></i>
    <button class="tool" disabled aria-label="Pin Labels"><svg><use href="#i-lab1"/></svg></button>
    <button class="tool" disabled aria-label="Show Labels"><svg><use href="#i-lab2"/></svg></button>
    <button class="tool" disabled aria-label="Move Label"><svg><use href="#i-lab3"/></svg></button>
    <button class="tool" disabled aria-label="Rotate Label"><svg><use href="#i-lab4"/></svg></button>
    <button class="tool" disabled aria-label="Change Label"><svg><use href="#i-lab5"/></svg></button>
    <i class="grip"></i>
    <button class="tool" aria-label="MetaSearch"><svg><use href="#i-meta"/></svg></button>
    <i class="grip narrow"></i>
    <button class="tool" aria-label="Python Console"><svg><use href="#i-python"/></svg></button>
    <i class="grip narrow"></i>
    <button class="tool" aria-label="Help"><svg><use href="#i-help"/></svg></button>
    <i class="grip narrow"></i>
  </div>
  <div class="toolbar">
    <i class="grip"></i>
    <button class="tool" disabled aria-label="Advanced Digitizing"><svg><use href="#i-cad"/></svg></button>
    <button class="tool" disabled aria-label="Digitize with Segment"><svg><use href="#i-segment"/></svg></button><button class="drop" aria-label="Segment options"></button>
    <button class="tool" disabled aria-label="Move Feature"><svg><use href="#i-mv"/></svg></button><button class="drop" aria-label="Move options"></button>
    <button class="tool" disabled aria-label="Rotate Feature"><svg><use href="#i-rot"/></svg></button>
    <button class="tool" disabled aria-label="Scale Feature"><svg><use href="#i-scale"/></svg></button>
    <button class="tool" disabled aria-label="Simplify"><svg><use href="#i-simplify"/></svg></button>
    <button class="tool" disabled aria-label="Add Ring"><svg><use href="#i-addring"/></svg></button>
    <button class="tool" disabled aria-label="Add Part"><svg><use href="#i-addpart"/></svg></button>
    <button class="tool" disabled aria-label="Fill Ring"><svg><use href="#i-fillring"/></svg></button>
    <button class="tool" disabled aria-label="Delete Ring"><svg><use href="#i-delring"/></svg></button>
    <button class="tool" disabled aria-label="Delete Part"><svg><use href="#i-delpart"/></svg></button>
    <button class="tool" disabled aria-label="Reshape"><svg><use href="#i-reshape"/></svg></button>
    <button class="tool" disabled aria-label="Offset Curve"><svg><use href="#i-offset"/></svg></button>
    <button class="tool" disabled aria-label="Reverse Line"><svg><use href="#i-revert"/></svg></button>
    <button class="tool" disabled aria-label="Trim or Extend"><svg><use href="#i-trim"/></svg></button>
    <button class="tool" disabled aria-label="Split Features"><svg><use href="#i-split"/></svg></button>
    <button class="tool" disabled aria-label="Split Parts"><svg><use href="#i-split"/></svg></button>
    <button class="tool" disabled aria-label="Merge Features"><svg><use href="#i-merge"/></svg></button>
    <button class="tool" disabled aria-label="Merge Attributes"><svg><use href="#i-attrs"/></svg></button>
    <button class="tool" disabled aria-label="Rotate Symbols"><svg><use href="#i-rotsym"/></svg></button><button class="drop" aria-label="Rotate options"></button>
    <i class="grip wide"></i>
    <button class="tool" disabled aria-label="Local Stretch"><svg><use href="#s-hist"/></svg></button>
    <button class="tool" disabled aria-label="Full Stretch"><svg><use href="#i-h2"/></svg></button>
    <button class="tool" disabled aria-label="Local Cut Stretch"><svg><use href="#s-hist"/></svg></button>
    <button class="tool" disabled aria-label="Full Cut Stretch"><svg><use href="#i-h2"/></svg></button>
    <button class="tool" disabled aria-label="Increase Brightness"><svg><use href="#i-sunup"/></svg></button>
    <button class="tool" disabled aria-label="Decrease Brightness"><svg><use href="#i-sundn"/></svg></button>
    <button class="tool" disabled aria-label="Increase Contrast"><svg><use href="#i-conup"/></svg></button>
    <button class="tool" disabled aria-label="Decrease Contrast"><svg><use href="#i-condn"/></svg></button>
    <button class="tool" disabled aria-label="Increase Gamma"><svg><use href="#i-gamup"/></svg></button>
    <button class="tool" disabled aria-label="Decrease Gamma"><svg><use href="#i-gamdn"/></svg></button>
  </div>
  <div class="toolbar">
    <i class="grip"></i>
    <button class="tool" disabled aria-label="Circular String"><svg><use href="#i-curve"/></svg></button><button class="drop" aria-label="Curve options"></button>
    <button class="tool" disabled aria-label="Add Circle"><svg><use href="#i-circle"/></svg></button><button class="drop" aria-label="Circle options"></button>
    <button class="tool" disabled aria-label="Add Ellipse"><svg><use href="#i-ellipse"/></svg></button><button class="drop" aria-label="Ellipse options"></button>
    <button class="tool" disabled aria-label="Add Rectangle"><svg><use href="#i-rect"/></svg></button><button class="drop" aria-label="Rectangle options"></button>
    <button class="tool" disabled aria-label="Add Regular Polygon"><svg><use href="#i-penta"/></svg></button><button class="drop" aria-label="Polygon options"></button>
  </div>
</header>

<main class="work">
  <aside class="docks">
    <section class="dock browser">
      <div class="dock-title"><h2>Browser</h2><button aria-label="Float"><svg><use href="#i-float"/></svg></button><button aria-label="Close"><svg><use href="#i-close"/></svg></button></div>
      <div class="dock-tools">
        <button aria-label="Add Layers"><svg><use href="#i-addsel"/></svg></button>
        <button aria-label="Refresh"><svg><use href="#i-refresh"/></svg></button>
        <button aria-label="Filter"><svg><use href="#s-funnel"/></svg></button>
        <button aria-label="Collapse All"><svg><use href="#i-collapse"/></svg></button>
        <button aria-label="Properties"><svg><use href="#i-info"/></svg></button>
      </div>
      <div class="tree">
        <ul class="sources">
          <li class="has-kids"><svg><use href="#i-bm"/></svg>Spatial Bookmarks</li>
          <li class="has-kids"><svg><use href="#i-phome"/></svg>Project Home</li>
          <li class="has-kids"><svg><use href="#i-home"/></svg>Home</li>
          <li class="has-kids"><svg><use href="#s-folder"/></svg>/ (Macintosh HD)</li>
          <li class="has-kids"><svg><use href="#s-folder"/></svg>/Volumes</li>
          <li class="has-kids"><svg><use href="#s-box"/></svg>GeoPackage</li>
          <li><svg><use href="#s-feather"/></svg>SpatiaLite</li>
          <li class="has-kids"><svg><use href="#i-pg"/></svg>PostGIS</li>
          <li><svg><use href="#i-mssql"/></svg>MSSQL</li>
          <li><svg><use href="#i-oracle"/></svg>Oracle</li>
          <li class="has-kids"><svg><use href="#s-globe"/></svg>WMS/WMTS</li>
          <li><svg><use href="#i-vt"/></svg>Vector Tiles</li>
          <li class="has-kids"><svg><use href="#i-xyz"/></svg>XYZ Tiles</li>
          <li><svg><use href="#i-wcs"/></svg>WCS</li>
          <li><svg><use href="#i-wfs"/></svg>WFS / OGC API - Features</li>
          <li><svg><use href="#i-arc"/></svg>ArcGIS REST Servers</li>
          <li><svg><use href="#i-geonode"/></svg>GeoNode</li>
        </ul>
        <div class="vscroll"><button class="up" aria-label="Scroll up"></button><div class="track"><div class="thumb"></div></div><button class="down" aria-label="Scroll down"></button></div>
      </div>
      <div class="tabs"><button>Layer Order</button><button class="current">Browser</button></div>
    </section>
    <div class="splitter"></div>
    <section class="dock layers">
      <div class="dock-title"><h2>Layers</h2><button aria-label="Float"><svg><use href="#i-float"/></svg></button><button aria-label="Close"><svg><use href="#i-close"/></svg></button></div>
      <div class="dock-tools">
        <button aria-label="Layer Styling"><svg><use href="#i-brush"/></svg></button>
        <button aria-label="Add Group"><svg><use href="#i-group"/></svg></button>
        <button aria-label="Map Themes"><svg><use href="#i-eye"/></svg></button>
        <button aria-label="Filter Legend"><svg><use href="#i-filterm"/></svg></button>
        <button aria-label="Filter by Expression"><svg><use href="#i-epsf"/></svg></button><button class="drop" aria-label="Expression options"></button>
        <button aria-label="Expand All"><svg><use href="#i-expand"/></svg></button>
        <button aria-label="Collapse All"><svg><use href="#i-collapse"/></svg></button>
        <button aria-label="Remove Layer"><svg><use href="#i-remove"/></svg></button>
      </div>
      <div class="tree layer-tree">
        <ul>
          <li class="layer selected"><label><input type="checkbox" checked><svg><use href="#s-poly"/></svg><span>1_CreateGeoJsonFromCSV/ShapesRawGenericCRS.geojson</span></label></li>
          <li class="legend"><label><input type="checkbox" checked aria-label="Other"><i class="swatch other"></i></label></li>
          <li class="legend"><label><input type="checkbox" checked><i class="swatch fill"></i>Fill</label></li>
          <li class="legend"><label><input type="checkbox" checked><i class="swatch trail1"></i>Trail1</label></li>
          <li class="legend"><label><input type="checkbox" checked><i class="swatch trail21"></i>Trail2.1</label></li>
          <li class="legend"><label><input type="checkbox" checked><i class="swatch trail22"></i>Trail2.2</label></li>
          <li class="layer"><label><input type="checkbox"><svg><use href="#s-poly"/></svg><span>2_GeometricTransformOfGeoJsonGenericCRS/Shapes</span></label></li>
          <li class="layer"><label><input type="checkbox"><svg><use href="#s-poly"/></svg><span>ExampleImage-AdjustedShapes</span></label></li>
          <li class="layer"><label><input type="checkbox"><svg><use href="#i-raster"/></svg><span>ExampleImage</span></label><button class="nocrs" aria-label="Set projection">?</button></li>
          <li class="layer"><label><input type="checkbox"><svg><use href="#s-poly"/></svg><span>3_GeometricTransformOfGeoJsonDefinedCRS/Shapes</span></label></li>
        </ul>
        <div class="hscroll"><button class="left" aria-label="Scroll left"></button><div class="track"><div class="thumb"></div></div><button class="right" aria-label="Scroll right"></button></div>
      </div>
    </section>
  </aside>
  <div class="splitter side"></div>
  <section class="canvas"><svg id="map" viewBox="0 0 1220 854" role="img" aria-label="Map"></svg></section>
</main>

<footer class="status">
  <label class="locate"><svg><use href="#i-search"/></svg><input type="text" placeholder="Type to locate (⌘K)" aria-label="Locate"></label>
  <p>Toggles the editing state of the current layer</p>
  <label for="coord">Coordinate</label>
  <input id="coord" class="field" type="text" value="-1476,455">
  <button class="ext" aria-label="Toggle extents"><svg><use href="#i-mouse"/></svg></button>
  <label for="scale">Scale</label>
  <div class="combo"><select id="scale"><option>:499634944</option></select></div>
  <button class="lock" aria-label="Lock scale"><svg><use href="#i-lock"/></svg></button>
  <label for="magnifier">Magnifier</label>
  <div class="spin"><input id="magnifier" type="text" value="100%"><div><button class="up" aria-label="Increase"></button><button class="down" aria-label="Decrease"></button></div></div>
  <label for="rotation" class="rot">Rotation</label>
  <div class="spin wide"><input id="rotation" type="text" value="0.0 °"><div><button class="up" aria-label="Increase"></button><button class="down" aria-label="Decrease"></button></div></div>
  <label class="render"><input type="checkbox" checked>Render</label>
  <button class="crs" aria-label="Projection"><svg><use href="#i-crs"/></svg></button>
  <button class="chat" aria-label="Messages"><svg><use href="#i-chat"/></svg></button>
</footer>
<script src="map.js"></script>
</body>
</html>
```
FILE: map.js
```js
// Draws the plot grid: 12 rows of 50 plots. f = Fill, g = Trail1, b = Trail2.1, p = Trail2.2.
const starts = ["ppp", "ppf", "ppf", "pfp", "ppp", "pfp", "fpp", "ppp", "pfp", "fff", "fff", "fff"];
const names = { f: "fill", g: "trail1", b: "trail21", p: "trail22" };
const map = document.getElementById("map");

starts.forEach((start, row) => {
  const tail = row < 10 ? "ggg" + "fggg".repeat(8) + "ff" : "f".repeat(37);
  const plots = "ff" + start + "bbbb" + "ffff" + tail;
  [...plots].forEach((kind, col) => {
    const rect = document.createElementNS("http://www.w3.org/2000/svg", "rect");
    rect.setAttribute("class", "plot " + names[kind]);
    rect.setAttribute("x", (185.5 + col * 17.19).toFixed(1));
    rect.setAttribute("y", (19.5 + row * 70.18).toFixed(1));
    rect.setAttribute("width", 6);
    rect.setAttribute("height", 41.5);
    map.append(rect);
  });
});
```
FILE: styles.css
```css
* { box-sizing: border-box; }
html, body { height: 100%; }
body {
  margin: 0;
  display: flex;
  flex-direction: column;
  background: #ececec;
  color: #111;
  font: 14px/20px Inter, "Liberation Sans", sans-serif;
  overflow: hidden;
}
button { border: 0; padding: 0; margin: 0; background: none; font: inherit; color: inherit; }
input, select { font: inherit; color: inherit; margin: 0; }
ul { list-style: none; margin: 0; padding: 0; }
h2, p { margin: 0; font: inherit; }
svg { display: block; flex: none; }
.sprite { display: none; }
.serif { font-family: "Liberation Serif", serif; }
.tagtext { font-size: 9px; font-weight: 700; }

/* toolbars */
.toolbar {
  display: flex;
  align-items: center;
  height: 44px;
  padding-top: 2px;
  border-bottom: 2px solid #bdbdbd;
  background: linear-gradient(#f6f6f6, #eaeaea);
}
.toolbar:first-child { height: 42px; padding-top: 1px; }
.tool {
  flex: none;
  display: grid;
  place-items: center;
  width: 37px;
  height: 35px;
}
.tool svg { width: 26px; height: 26px; }
.tool.on { background: #d6d6d6; border: 1px solid #a8a8a8; border-radius: 3px; }
.tool:disabled svg { opacity: .36; filter: grayscale(.7); }
.tool.mini { position: relative; }
.tool.mini::after {
  content: "";
  position: absolute;
  right: 2px;
  bottom: 2px;
  border: 3px solid transparent;
  border-top-color: #333;
  border-bottom: 0;
}
.drop { flex: none; width: 14px; height: 26px; display: grid; place-items: center; }
.drop::after { content: ""; border: 4px solid transparent; border-top: 5px solid #333; border-bottom: 0; }
.grip {
  flex: none;
  width: 20px;
  height: 20px;
  padding-left: 11px;
  padding-right: 3px;
  background: radial-gradient(circle at 1px 1px, #c6c6c6 1px, transparent 1px) 0 0 / 3px 3px content-box;
}
.grip:first-child { width: 9px; padding: 0 2px 0 1px; }
.grip.narrow { width: 18px; padding-left: 9px; }
.grip.wide { width: 24px; padding-right: 7px; }
.rule { flex: none; width: 8px; height: 22px; padding: 0 3px 0 4px; background: #cfcfcf content-box; }

/* work area */
.work { flex: 1; min-height: 0; display: flex; padding-top: 1px; }
.docks { width: 472px; display: flex; flex-direction: column; }
.dock { display: flex; flex-direction: column; min-height: 0; }
.browser { flex: 451 1 0; }
.layers { flex: 398 1 0; }
.dock-title { flex: none; display: flex; align-items: center; gap: 2px; height: 22px; padding-right: 1px; font-size: 13px; }
.dock-title h2 { flex: 1; }
.dock-title svg { width: 14px; height: 14px; }
.dock-tools { flex: none; display: flex; align-items: center; gap: 11px; height: 34px; padding: 0 5px; }
.dock-tools svg { width: 17px; height: 17px; }
.dock-tools .drop { margin: 0 -6px; }
.tree { flex: 1; min-height: 0; display: flex; background: #fff; border: 1px solid #c4c4c4; border-left: 0; }
.sources { flex: 1; height: 345px; display: grid; grid-auto-rows: 1fr; font-size: 14px; }
.sources li { display: flex; align-items: center; gap: 7px; padding-left: 18px; min-height: 0; }
.sources svg { width: 18px; height: 17px; }
.sources .has-kids { padding-left: 4px; }
.has-kids::before, .layer::before {
  content: "";
  flex: none;
  width: 5px;
  height: 8px;
  background: #555;
  clip-path: polygon(0 0, 100% 50%, 0 100%);
}
.has-kids::before { margin-right: 2px; }
.vscroll { width: 16px; display: flex; flex-direction: column; border-left: 1px solid #c9c9c9; }
.vscroll button { height: 14px; display: grid; place-items: center; }
.vscroll .track { flex: 1; background: linear-gradient(90deg, #efefef, #fff); border: solid #c9c9c9; border-width: 1px 0; }
.vscroll .thumb { height: 34px; background: #e3e3e3; border-bottom: 1px solid #bbb; }
.up::after, .down::after { content: ""; border: 4px solid transparent; }
.up::after { border-bottom: 5px solid #444; border-top: 0; }
.down::after { border-top: 5px solid #444; border-bottom: 0; }
.tabs { flex: none; display: flex; align-items: flex-start; height: 32px; }
.tabs button { padding: 0 14px 0 9px; height: 28px; background: #dcdcdc; border: 1px solid #b5b5b5; border-left: 0; }
.tabs .current { padding: 0 14px; height: 30px; background: #f6f6f6; border-top: 0; border-radius: 0 0 3px 3px; }
.splitter { flex: none; height: 6px; width: 20px; margin: 0 auto; background: radial-gradient(circle at 1px 1px, #c6c6c6 1px, transparent 1px) 0 0 / 3px 8px; }
.splitter.side { width: 8px; height: auto; margin: 0; background: radial-gradient(circle at 1px 1px, #c6c6c6 1px, transparent 1px) 4px 50% / 8px 3px no-repeat; }

/* layer tree */
.layer-tree { flex-direction: column; }
.layer-tree ul { flex: 1; min-height: 0; overflow: hidden; }
.layer { display: flex; align-items: center; height: 20px; padding-left: 6px; }
.layer label { flex: 1; min-width: 0; display: flex; align-items: center; gap: 7px; padding-left: 11px; overflow: hidden; }
.layer svg { width: 18px; height: 18px; }
.layer span { white-space: nowrap; font-size: 15px; font-weight: 700; font-style: italic; color: #777; }
.layer.selected { padding-left: 4px; background: #0c64df; }
.layer.selected label { padding-left: 9px; }
.layer.selected::before { width: 9px; height: 5px; background: #0b3a82; clip-path: polygon(0 0, 100% 0, 50% 100%); }
.layer.selected span { color: #fff; font-style: normal; text-decoration: underline; }
.legend { height: 41px; padding: 1px 0 0 45px; }
.legend:nth-child(3), .legend:nth-child(5) { height: 40px; }
.legend label { display: flex; align-items: center; gap: 7px; }
input[type="checkbox"] { appearance: none; flex: none; display: grid; width: 16px; height: 16px; padding: 2px; background: #fff; border: 1px solid #bbb; }
input[type="checkbox"]:checked::before { content: ""; background: #000; clip-path: polygon(5% 50%, 22% 46%, 40% 70%, 78% 0, 96% 0, 46% 100%, 34% 100%); }
.swatch { width: 38px; height: 38px; border: 1px solid; }
.other { background: #3cef2d; border-color: #1f9f18; }
.swatch.fill { background: #55efd0; border-color: #2c9f8a; }
.swatch.trail1 { background: #7acb42; border-color: #4b8f1e; }
.swatch.trail21 { background: #b03c0f; border-color: #7d1c08; }
.swatch.trail22 { background: #bb4cc0; border-color: #8a1892; }
.nocrs { flex: none; width: 18px; height: 18px; margin-right: 5px; border: 1px solid #ddd; border-radius: 2px; background: #f6f6f6; color: #555; font-size: 14px; line-height: 16px; font-weight: 700; }
.hscroll { flex: none; display: flex; height: 16px; border-top: 1px solid #c4c4c4; }
.hscroll button { width: 16px; display: grid; place-items: center; }
.hscroll button:first-child { width: 12px; padding-right: 4px; }
.left::after, .right::after { content: ""; border: 4px solid transparent; }
.left::after { border-right: 5px solid #444; border-left: 0; }
.right::after { border-left: 5px solid #444; border-right: 0; }
.hscroll .track { flex: 1; display: flex; background: #e3e3e3; border: solid #b5b5b5; border-width: 0 1px; }
.hscroll .thumb { width: 72%; background: linear-gradient(#fff, #f1f1f1); border-right: 1px solid #b5b5b5; }

/* map canvas */
.canvas { flex: 1; min-width: 0; background: #fff; border: 1px solid #c4c4c4; overflow: hidden; }
.canvas svg { width: 100%; height: 100%; }
.plot { stroke: #333; stroke-opacity: .75; stroke-width: 1px; }
.plot.fill { fill: #52efd0; }
.plot.trail1 { fill: #79ca41; }
.plot.trail21 { fill: #b13c10; }
.plot.trail22 { fill: #bb49c0; }

/* status bar */
.status { flex: none; display: flex; align-items: center; height: 34px; padding: 2px 8px 0 0; font-size: 13px; }
.status p { flex: 1; margin-left: 10px; white-space: nowrap; }
.locate { display: flex; align-items: center; gap: 7px; width: 241px; height: 28px; padding-left: 7px; background: #fff; border: 2px solid #c2c2c2; border-radius: 4px; }
.status .locate svg { width: 15px; height: 15px; }
.locate input { flex: 1; min-width: 0; border: 0; padding: 0; background: none; outline: 0; font-size: 14px; }
.locate input::placeholder { color: #777; opacity: 1; }
.field { width: 80px; height: 26px; margin-left: 4px; padding: 0 7px; border: 1px solid #b5b5b5; border-radius: 3px; background: #fff; }
.status svg { width: 18px; height: 18px; }
.ext { margin: 0 14px 0 4px; }
.combo { display: flex; align-items: center; position: relative; width: 105px; height: 27px; margin-left: 4px; border: 1px solid #b5b5b5; border-radius: 3px; background: linear-gradient(90deg, #fff 80px, #c9c9c9 80px, #c9c9c9 81px, #f3f3f3 81px); }
.combo select { appearance: none; width: 100%; height: 100%; padding: 0 0 0 2px; border: 0; background: none; }
.combo::after { content: ""; position: absolute; right: 7px; border: 5px solid transparent; border-top-color: #444; border-bottom: 0; pointer-events: none; }
.lock { margin: 0 6px 0 10px; }
.spin { display: flex; width: 102px; height: 26px; margin-left: 5px; border: 1px solid #b5b5b5; border-radius: 3px; background: #fff; overflow: hidden; }
.spin.wide { width: 105px; margin-left: 11px; }
.spin input { flex: 1; min-width: 0; border: 0; padding: 0 5px; background: none; }
.spin div { width: 16px; display: flex; flex-direction: column; justify-content: center; gap: 4px; border-left: 1px solid #c9c9c9; background: #f5f5f5; }
.spin div button { display: grid; place-items: center; }
.rot { margin-left: 10px; }
.render { display: flex; align-items: center; gap: 4px; margin: 0 16px 0 6px; }
.chat { margin-left: 28px; }
.chat svg { width: 19px; height: 19px; }
```
